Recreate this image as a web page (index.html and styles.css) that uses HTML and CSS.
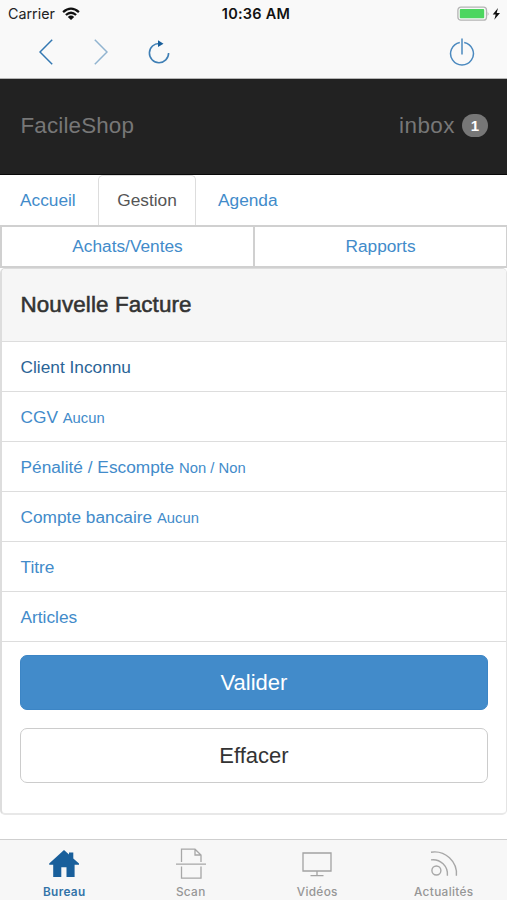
FILE: index.html
```html
<!DOCTYPE html>
<html lang="fr">
<head>
<meta charset="utf-8">
<title>FacileShop</title>
<link rel="stylesheet" href="styles.css">
</head>
<body>
<div class="screen">
  <header class="chrome">
    <div class="status">
      <div class="carrier"><span>Carrier</span>
        <svg width="18" height="14" viewBox="0 0 18 14" fill="none" stroke="#111" stroke-width="2.3"><path d="M1.1 5.1Q9-1.8 16.9 5.1M3.9 8Q9 3.5 14.1 8"/><path d="M5.8 9.9Q9 7.2 12.2 9.9L9 13Z" fill="#111" stroke="none"/></svg>
      </div>
      <span class="time">10:36 AM</span>
      <svg class="battery" width="44" height="16" viewBox="0 0 44 16"><rect x=".9" y="1.2" width="28.6" height="13" rx="3" fill="none" stroke="#b4b4b4" stroke-width="1.3"/><rect x="2.8" y="3.1" width="24.4" height="9.2" rx=".8" fill="#4cd65f"/><path d="M30.7 5.5Q32.4 7.7 30.7 10Z" fill="#aaa"/><path d="M41 2L35.7 8.4H38.7L37.3 13.7L43 7H39.7Z" fill="#111"/></svg>
    </div>
    <nav class="browser">
      <svg width="14" height="26" viewBox="0 0 14 26" fill="none" stroke="#3378b2" stroke-width="1.5"><path d="M13.2 .8L1 13L13.2 25.2"/></svg>
      <svg width="14" height="26" viewBox="0 0 14 26" fill="none" stroke="#91b4d0" stroke-width="1.5"><path d="M.8 .8L13 13L.8 25.2"/></svg>
      <svg width="22" height="24" viewBox="0 0 22 24" fill="none"><path d="M11.5 3.5A9.6 9.6 0 1 0 20.6 13" stroke="#3f7fb5" stroke-width="1.6"/><path d="M10 .2L15.5 3.8L10 7Z" fill="#195f9b"/></svg>
      <svg class="power" width="26" height="28" viewBox="0 0 26 28" fill="none" stroke="#4b89bf" stroke-width="1.5"><path d="M10.8 4.4A11.4 11.4 0 1 0 15.2 4.4M13 .5V16.5"/></svg>
    </nav>
  </header>
  <div class="brandbar"><span>FacileShop</span><span class="inbox">inbox<b class="badge">1</b></span></div>
  <nav class="tabs"><a>Accueil</a><a class="active">Gestion</a><a>Agenda</a></nav>
  <nav class="subtabs"><a>Achats/Ventes</a><a>Rapports</a></nav>
  <main class="panel">
    <h1>Nouvelle Facture</h1>
    <a class="row visited">Client Inconnu</a>
    <a class="row">CGV <small>Aucun</small></a>
    <a class="row">Pénalité / Escompte <small>Non / Non</small></a>
    <a class="row">Compte bancaire <small>Aucun</small></a>
    <a class="row">Titre</a>
    <a class="row">Articles</a>
    <div class="actions"><button class="primary">Valider</button><button>Effacer</button></div>
  </main>
  <footer class="bottom">
    <a class="selected"><svg width="32" height="32" viewBox="0 0 32 32"><path d="M16 2L1.2 15.6V16.8H5.2V29H13.3V19.2H18.5V29H26.6V16.8H31V15.6L25.3 10.4V4.6H21V6.6Z" fill="#195f9b"/></svg>Bureau</a>
    <a><svg width="32" height="32" viewBox="0 0 32 32" fill="none" stroke="#a7a7a7" stroke-width="1.3"><path d="M6.5 14V1.2H20L26 7V14M20 1.2V7H26M1 16.2H31M6.5 18.5V30.2H26V18.5"/></svg>Scan</a>
    <a><svg width="32" height="32" viewBox="0 0 32 32" fill="none" stroke="#a3a3a3" stroke-width="1.3"><path d="M2 5H30V23H2ZM16 23V27.4M9.5 27.6H22.5"/></svg>Vidéos</a>
    <a><svg width="32" height="32" viewBox="0 0 32 32" fill="none" stroke="#a7a7a7" stroke-width="1.4"><circle cx="8.4" cy="22.5" r="4.5"/><path d="M3 11.9A14.5 14.5 0 0 1 19.4 27.8M3 4.2A22 22 0 0 1 28.4 27.8"/></svg>Actualités</a>
  </footer>
</div>
</body>
</html>
```
FILE: styles.css
```css
* { box-sizing: border-box; }
body { margin: 0; background: #fff; color: #333; font: 17.3px "Liberation Sans", sans-serif; }
a { color: #428bca; }
svg { display: block; flex: none; }
.screen { width: 507px; height: 900px; display: flex; flex-direction: column; overflow: hidden; }
.chrome { height: 79px; flex: none; background: #f9f9f9; border-bottom: 1px solid #b5b5b5; }
.status { height: 27px; display: grid; grid-template-columns: 1fr 1fr 1fr; align-items: center; padding: 0 6px 0 8px; font: 14.3px Inter, sans-serif; color: #222; }
.carrier { display: flex; align-items: center; gap: 7px; }
.time { text-align: center; font-weight: 600; color: #111; font-size: 14.5px; letter-spacing: .25px; padding-left: 3px; white-space: nowrap; }
.battery { justify-self: end; }
.browser { height: 50px; display: flex; align-items: center; padding: 0 32px 0 39px; }
.browser svg:nth-child(2) { margin-left: 41px; }
.browser svg:nth-child(3) { margin-left: 40px; }
.browser .power { margin-left: auto; }
.brandbar { height: 96px; flex: none; display: flex; justify-content: space-between; align-items: center; padding: 0 19px 2px 20.5px; background: #222; border-bottom: 1px solid #080808; color: #777; font-size: 22.4px; letter-spacing: .15px; }
.inbox { display: flex; align-items: center; gap: 7px; letter-spacing: .5px; }
.badge { width: 26px; height: 23px; border-radius: 12px; background: #777; color: #fff; font-size: 15px; line-height: 23px; letter-spacing: 0; text-align: center; }
.tabs { height: 50px; flex: none; display: flex; }
.tabs a { line-height: 50px; padding: 0 22px 0 20px; }
.tabs .active { width: 98px; padding: 0; text-align: center; line-height: 48px; color: #555; border: 1px solid #ddd; border-bottom: 0; border-radius: 5px 5px 0 0; }
.tabs a:first-child { width: 98px; padding-right: 0; }
.tabs a:last-child { padding-left: 22px; }
.subtabs { height: 42px; flex: none; display: grid; grid-template-columns: 254px 253px; }
.subtabs a { border: 1px solid #d0d0d0; border-width: 2px 1px; text-align: center; line-height: 39px; }
.subtabs a:first-child { border-left-width: 2px; }
.panel { margin-top: 1px; height: 547px; flex: none; border: 1px solid #ddd; border-width: 1px 1px 2px 2px; border-color: #ddd #e4e4e4 #e8e8e8 #ddd; border-radius: 5px; overflow: hidden; }
h1 { margin: 0; height: 72px; background: #f6f6f6; padding-left: 18.5px; font-size: 22.4px; font-weight: 400; line-height: 72px; letter-spacing: .12px; -webkit-text-stroke: .55px #333; }
.row { display: block; height: 50px; border-top: 1px solid #ddd; padding-left: 18.5px; line-height: 50px; white-space: nowrap; }
.row small { font-size: 14.8px; }
.visited { color: #2a6496; }
.actions { border-top: 1px solid #ddd; padding: 13px 18px 0; display: flex; flex-direction: column; gap: 18px; }
button { height: 55px; padding: 1px 0 0; border: 1px solid #ccc; border-radius: 7px; background: #fff; color: #333; font: 22px "Liberation Sans", sans-serif; }
.primary { background: #428bca; border-color: #3c85c5; color: #fff; }
.bottom { margin-top: auto; height: 61px; flex: none; display: grid; grid-template-columns: repeat(4, 126.5px); background: #f7f7f7; border-top: 1px solid #cfcfcf; }
.bottom a { display: flex; flex-direction: column; align-items: center; padding-top: 8px; gap: 5px; padding-left: 2px; color: #969696; font: 500 11.8px/14px Inter, sans-serif; letter-spacing: .35px; }
.bottom .selected { color: #3273a8; font-weight: 600; }
```
